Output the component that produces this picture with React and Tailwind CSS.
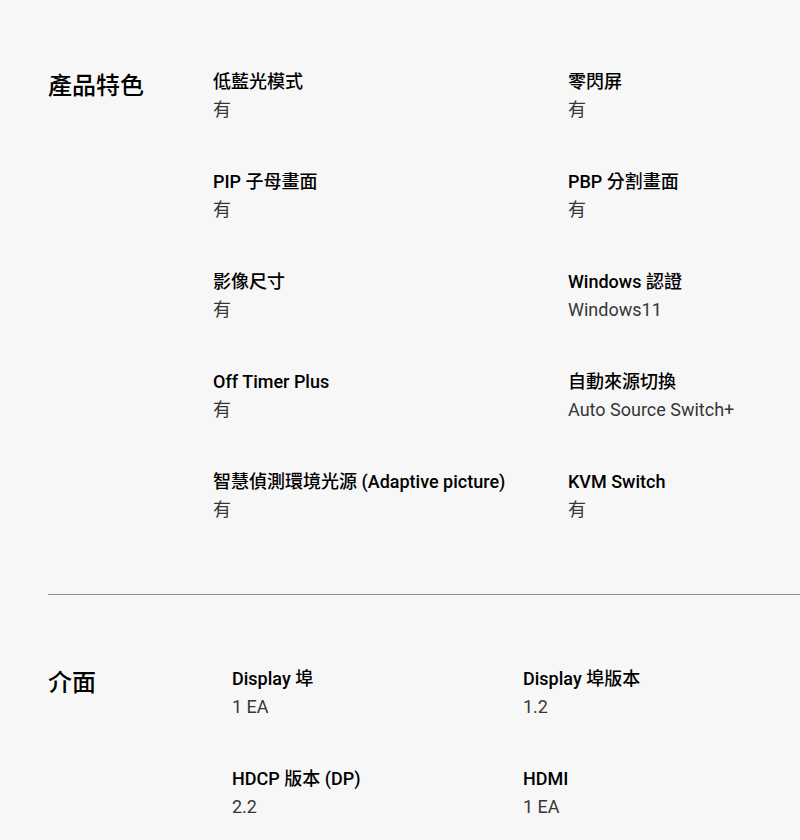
import React from "react";

const font = { fontFamily: 'Roboto, "Noto Sans CJK TC", sans-serif' };

const features = [
  ["低藍光模式", "有", "零閃屏", "有"],
  ["PIP 子母畫面", "有", "PBP 分割畫面", "有"],
  ["影像尺寸", "有", "Windows 認證", "Windows11"],
  ["Off Timer Plus", "有", "自動來源切換", "Auto Source Switch+"],
  ["智慧偵測環境光源 (Adaptive picture)", "有", "KVM Switch", "有"],
];

const iface = [
  ["Display 埠", "1 EA", "Display 埠版本", "1.2"],
  ["HDCP 版本 (DP)", "2.2", "HDMI", "1 EA"],
];

function Item({ label, value }) {
  return (
    <div className="flex flex-col">
      <div className="text-[18px] leading-[27px] font-medium text-black whitespace-nowrap">{label}</div>
      <div className="pt-px text-[18px] leading-[27px] text-[#363636] whitespace-nowrap">{value}</div>
    </div>
  );
}

export default function App() {
  return (
    <div className="w-full min-h-[840px] bg-[#f7f7f7] overflow-hidden" style={font}>
      <section className="flex pl-[48px] pt-[68px] pb-[71px]">
        <h2 className="w-[165px] shrink-0 text-[24px] leading-[36px] font-medium text-black">產品特色</h2>
        <div className="grid grid-cols-[355px_1fr] gap-y-[45px]">
          {features.map((r, i) => (
            <React.Fragment key={i}>
              <Item label={r[0]} value={r[1]} />
              <Item label={r[2]} value={r[3]} />
            </React.Fragment>
          ))}
        </div>
      </section>
      <div className="ml-[48px] h-px bg-[#8f8f8f]" />
      <section className="flex pl-[48px] pt-[70px]">
        <h2 className="w-[184px] shrink-0 text-[24px] leading-[36px] font-medium text-black">介面</h2>
        <div className="grid grid-cols-[291px_1fr] gap-y-[45px]">
          {iface.map((r, i) => (
            <React.Fragment key={i}>
              <Item label={r[0]} value={r[1]} />
              <Item label={r[2]} value={r[3]} />
            </React.Fragment>
          ))}
        </div>
      </section>
    </div>
  );
}
